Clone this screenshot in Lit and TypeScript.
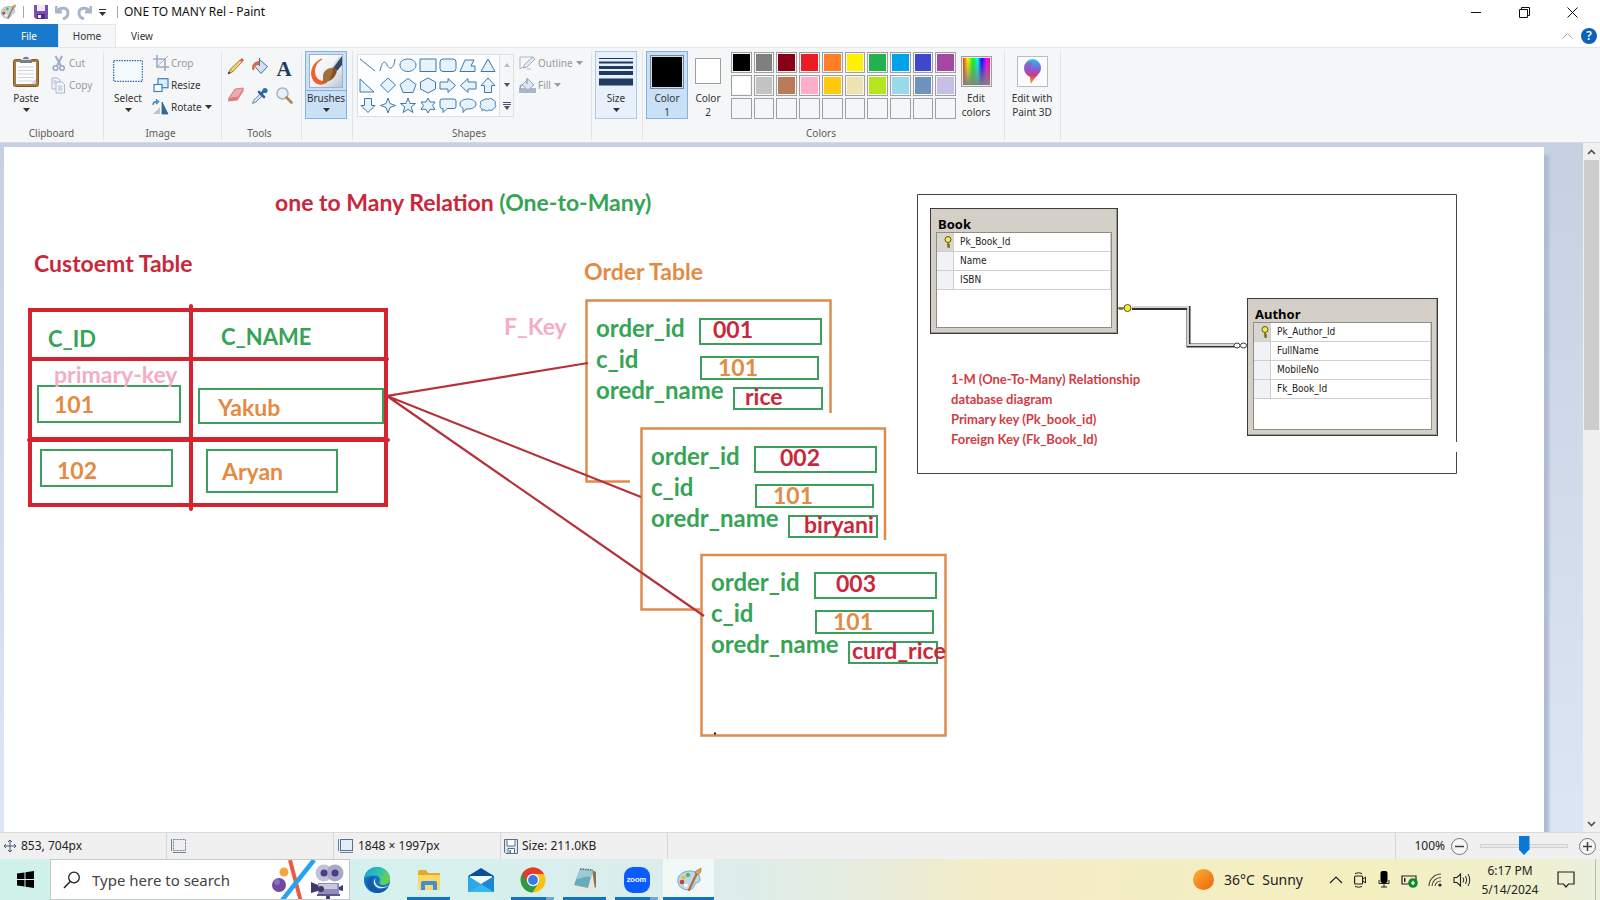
import { LitElement, html, svg, css } from "lit";
import { customElement, state } from "lit/decorators.js";
import { classMap } from "lit/directives/class-map.js";
import { styleMap } from "lit/directives/style-map.js";

const PALETTE = [
  ["Black", "#000000"], ["Gray-50%", "#7f7f7f"], ["Dark red", "#880015"], ["Red", "#ed1c24"], ["Orange", "#ff7f27"],
  ["Yellow", "#fff200"], ["Green", "#22b14c"], ["Turquoise", "#00a2e8"], ["Indigo", "#3f48cc"], ["Purple", "#a349a4"],
  ["White", "#ffffff"], ["Gray-25%", "#c3c3c3"], ["Brown", "#b97a57"], ["Rose", "#ffaec9"], ["Gold", "#ffc90e"],
  ["Light yellow", "#efe4b0"], ["Lime", "#b5e61d"], ["Light turquoise", "#99d9ea"], ["Blue-gray", "#7092be"], ["Lavender", "#c8bfe7"],
  ...Array.from({ length: 10 }, (_, i) => [`Custom ${i + 1}`, ""]),
];

const SHAPES: [string, string][] = [
  ["Line", "M2 2L17 14"],
  ["Curve", "M2 14C4 4 7 3 9 8C12 14 16 11 17 2"],
  ["Oval", "M10 2C14.500 2 18 4.600 18 8S14.500 14.500 10 14.500S2 11.800 2 8S5.500 2 10 2Z"],
  ["Rectangle", "M2 2H18V14.500H2Z"],
  ["Rounded rectangle", "M5 2H15Q18 2 18 5V11.500Q18 14.500 15 14.500H5Q2 14.500 2 11.500V5Q2 2 5 2Z"],
  ["Polygon", "M7 3H16L13 9H17V14.500H2Z"],
  ["Triangle", "M10 2L17 14.500H3Z"],
  ["Right triangle", "M2 2V15H16Z"],
  ["Diamond", "M10 1L17.500 8L10 15.500L2.500 8Z"],
  ["Pentagon", "M10 1.500L18 7.500L15 15.500H5L2 7.500Z"],
  ["Hexagon", "M10 1L17.500 5V12L10 16L2.500 12V5Z"],
  ["Right arrow", "M2 5H10V1.500L17.500 8.500L10 15.500V12H2Z"],
  ["Left arrow", "M18 5H10V1.500L2.500 8.500L10 15.500V12H18Z"],
  ["Up arrow", "M10 1L17 8.500H13.500V15.500H6.500V8.500H3Z"],
  ["Down arrow", "M10 15.500L17 8.500H13.500V1.500H6.500V8.500H3Z"],
  ["Four-point star", "M10 1L12 6.500L17.500 8.500L12 10.500L10 16L8 10.500L2.500 8.500L8 6.500Z"],
  ["Five-point star", "M10 1L12 6.500H17.500L13.200 10L15 15.500L10 12.300L5 15.500L6.800 10L2.500 6.500H8Z"],
  ["Six-point star", "M10 1L12 5H17L14.500 8.500L17 12.300H12L10 16L8 12.300H3L5.500 8.500L3 5H8Z"],
  ["Rounded callout", "M4 2H16Q18 2 18 4V9.500Q18 11.500 16 11.500H9L5 15.500V11.500H4Q2 11.500 2 9.500V4Q2 2 4 2Z"],
  ["Oval callout", "M10 2C14.500 2 18 4 18 7S14.500 12 10 12H8L5 15.500V11.200C3 10.200 2 8.800 2 7C2 4 5.500 2 10 2Z"],
  ["Cloud callout", "M6 3C7 1.500 9 1.500 10 2.500C11.500 1 14 1 15 3C17.500 3.500 18 5.500 17 7C18.500 9 17.500 11 15.500 11.500C15 13.500 12.500 14 11 12.800C9.500 14.500 7 14 6 12.500C4 15.500 3.500 13 4.500 12C2 11.500 1.500 9 3 7.500C1.500 5.500 3 3 6 3Z"],
];

interface Order { x: number; y: number; fields: { name: string; value: string; tone: string; pad: number }[] }
const order = (x: number, y: number, id: string, idPad: number, cPad: number, item: string, itemPad: number): Order => ({
  x, y,
  fields: [
    { name: "order_id", value: id, tone: "red", pad: idPad },
    { name: "c_id", value: "101", tone: "orange", pad: cPad },
    { name: "oredr_name", value: item, tone: "red", pad: itemPad },
  ],
});
const ORDERS: Order[] = [
  order(581, 152, "001", 12, 16, "rice", 10),
  order(636, 280, "002", 24, 16, "biryani", 14),
  order(696, 406, "003", 20, 16, "curd_rice", 2),
];

const ENTITIES = [
  { name: "Book", x: 926, y: 61, w: 188, h: 126, cols: ["Pk_Book_Id", "Name", "ISBN"] },
  { name: "Author", x: 1243, y: 151, w: 191, h: 138, cols: ["Pk_Author_Id", "FullName", "MobileNo", "Fk_Book_Id"] },
];

const LABELS = [
  { text: "Custoemt Table", x: 30, y: 101, tone: "red" },
  { text: "Order Table", x: 580, y: 109, tone: "orange" },
  { text: "F_Key", x: 500, y: 164, tone: "pink" },
];

const icon = (w: number, h: number, body: unknown) =>
  html`<svg width=${w} height=${h} viewBox="0 0 ${w} ${h}" fill="none" aria-hidden="true">${body}</svg>`;

const arrow = html`<svg class="arrow" width="7" height="4" viewBox="0 0 7 4" aria-hidden="true"><path d="M0 0H7L3.500 4Z" fill="currentColor"/></svg>`;

const paletteIcon = (s: number) => html`<svg width=${s} height=${s} viewBox="0 0 26 26" fill="none" aria-hidden="true">
  <path d="M2 15C1 9 6 4.500 13 4C19 3.500 24 7 24 12C24 15 22 15.500 20 16C18 16.500 19 19 17 21C13 25 3 22.500 2 15Z" fill="#b9d9ee" stroke="#7ba6c6"/>
  <circle cx="6" cy="15" r="2.300" fill="#d33c38"/><circle cx="7.500" cy="10.500" r="2" fill="#f0bb33"/>
  <circle cx="12" cy="8" r="2.200" fill="#60b747"/><circle cx="10" cy="18.500" r="1.900" fill="#fff"/>
  <path d="M13 23L21 6" stroke="#b87333" stroke-width="2.400" stroke-linecap="round"/>
  <path d="M19 6C19 3 23 3 25 1C25 4 25 6 22 8Z" fill="#d6a15c" stroke="#95602c" stroke-width=".6"/></svg>`;

const IC = {
  save: icon(14, 14, svg`<path d="M0 0H14V14H2L0 12Z" fill="#7a4fb5"/><path d="M3 0H11V6H3Z" fill="#efe9fa"/><path d="M3 9H11V14H3Z" fill="#4b2f80"/><path d="M4 10H7V13H4Z" fill="#f4f0fb"/>`),
  undo: icon(15, 15, svg`<path d="M1 1V7H7M2 6C6 1.500 13 2.500 13 8C13 11 11 13 8 14" stroke="#a8b6cc" stroke-width="3"/>`),
  redo: icon(15, 15, svg`<path d="M14 1V7H8M13 6C9 1.500 2 2.500 2 8C2 11 4 13 7 14" stroke="#a8b6cc" stroke-width="3"/>`),
  paste: icon(26, 31, svg`<rect x=".5" y="3.500" width="25" height="27" rx="2" fill="#a97b42" stroke="#80592a"/><path d="M3 6H23V28H3Z" fill="#fdfdfe"/><path d="M5 11H21M5 14.500H21M5 18H21M5 21.500H21M5 25H21" stroke="#c9d4e4"/><path d="M7 3H10C10 0 16 0 16 3H19V7H7Z" fill="#7b7e84"/><path d="M8 3.500H18" stroke="#d5d7da"/><path d="M23 23V28H18Z" fill="#cfd5df"/>`),
  cut: icon(16, 17, svg`<path d="M4.500 1L10 11M11 1L6 11" stroke="#9eacc2" stroke-width="2"/><circle cx="4.500" cy="13" r="2.300" stroke="#9eacc2" stroke-width="1.600"/><circle cx="11" cy="13" r="2.300" stroke="#9eacc2" stroke-width="1.600"/>`),
  copy: icon(16, 17, svg`<path d="M1 1H7L9 3V12H1Z" fill="#eef2f8" stroke="#a9b7cc"/><path d="M5 5H11L13.500 7.500V16H5Z" fill="#f4f7fb" stroke="#a9b7cc"/><path d="M7 9H11.500M7 11H11.500M7 13H11.500M2.500 4H5M2.500 6H4" stroke="#a9b7cc"/>`),
  select: icon(30, 22, svg`<rect x=".7" y=".7" width="28.600" height="20.600" fill="#f5fafe" stroke="#2f679f" stroke-width="1.200" stroke-dasharray="1.500 1.100"/>`),
  crop: icon(16, 16, svg`<path d="M0 4H12V16M4 0V12H16" stroke="#9cabc2" stroke-width="1.600"/><path d="M4 12L15 1" stroke="#9cabc2"/><path d="M6 6H10L6 10Z" fill="#d8e0eb"/>`),
  resize: icon(16, 15, svg`<rect x="5" y=".7" width="10" height="9" fill="#dcedfb" stroke="#3c81bd" stroke-width="1.200"/><rect x="1" y="6.500" width="8" height="7" fill="#fff" stroke="#3c81bd" stroke-width="1.200"/>`),
  rotate: icon(17, 17, svg`<path d="M10 3V15H16Z" fill="#2e6da4" stroke="#24567f" stroke-width=".7"/><path d="M8 8V15H1Z" fill="#b8c6d6"/><path d="M1 6C1 3 3 2.500 5 2.500M4 .500L6.500 2.500L4 5" stroke="#3587c7" stroke-width="1.500"/>`),
  pencil: icon(18, 18, svg`<path d="M1 17L3 12.500L13 3L15 5L5.500 15Z" fill="#f1cf6b" stroke="#8d6b30" stroke-width=".8"/><path d="M13 2.800L14.800 1.200Q17 1.500 16.800 3.400L15.300 4.800Z" fill="#c8625b"/><path d="M1 17L2 14.500L3.600 16Z" fill="#222"/><path d="M3.500 12.500L5.800 14.700" stroke="#a57d3d" stroke-width=".8"/>`),
  bucket: icon(18, 18, svg`<path d="M9 3L16.500 9.500L10 16.500L3.500 9Z" fill="#cfe3f3" stroke="#4a7298"/><path d="M8.500 9V1" stroke="#4a7298"/><path d="M8 4C4 4.500 1 7 1 11C1 14 3.500 14 3.500 11C3.500 9 5 8 8 8Z" fill="#e5643a"/>`),
  eraser: icon(18, 16, svg`<path d="M8 2L16.500 1L11.500 10L1.500 11.500Z" fill="#f2a9a9" stroke="#c96f73" stroke-width=".8"/><path d="M1.500 11.500L1 14.500L10.500 13.500L16.500 4V1L11.500 10Z" fill="#d87e80"/>`),
  dropper: icon(18, 18, svg`<path d="M1.500 16.500L3 13L9 7L11 9L5 15Z" fill="#d6e5f0" stroke="#5c7f9e" stroke-width=".9"/><path d="M8 5L13 10M10 7L14 3" stroke="#27679f" stroke-width="2.600" stroke-linecap="round"/><circle cx="14" cy="3.500" r="2.600" fill="#2a6fae"/>`),
  magnifier: icon(17, 17, svg`<circle cx="6.500" cy="6.500" r="5.500" fill="#e5f2fb" stroke="#a7b4c1" stroke-width="1.500"/><path d="M10.500 10.500L15.500 15.500" stroke="#b18656" stroke-width="2.600" stroke-linecap="round"/>`),
  brush: html`<svg width="34" height="34" viewBox="0 0 34 34" fill="none" aria-hidden="true"><defs><linearGradient id="bg" x1="0" y1="0" x2="1" y2="1"><stop offset="0" stop-color="#fff"/><stop offset=".6" stop-color="#eef1f5"/><stop offset="1" stop-color="#b6c1cf"/></linearGradient></defs><rect x=".5" y=".5" width="33" height="33" fill="url(#bg)" stroke="#9fb3c9"/><path d="M13 5C3 8 0 20 5 27C8 31 14 31 18 28C11 28 6 25 5.500 18C5.500 12 8 8 13 5Z" fill="#ee5f2a" stroke="#ee5f2a"/><path d="M33 2L23 14L28 17L33 11Z" fill="#33475f"/><path d="M31 3L23 14" stroke="#d3dae2" stroke-width="2"/><path d="M22 14C27 13 29 17 27 20C25 25 21 28 12 29C16 26 12 21 16 17C18 15 20 14 22 14Z" fill="#a3703c"/><path d="M24 14C27 14 28 17 27 19C26 22 23 25 20 26C23 21 24 18 24 14Z" fill="#7d5227"/></svg>`,
  outline: icon(17, 15, svg`<path d="M14 1H1V13L4 11M8 13H12" stroke="#aab7ca"/><path d="M4 12L6 8L14 1L16 3L8 11Z" fill="#e8edf4" stroke="#9babc1"/>`),
  fill: icon(17, 16, svg`<path d="M0 11H17V16H0Z" fill="#a9b6cb"/><path d="M9 2L15 8L9 13L3 8Z" fill="#dfe6ef" stroke="#9babc1"/><path d="M8 7V1M3 8Q0 9 2 12" stroke="#9babc1" stroke-width="1.500"/>`),
  size: icon(34, 28, svg`<path d="M0 .5H34" stroke="#1f3b5f"/><path d="M0 4.500H34" stroke="#1f3b5f" stroke-width="2"/><path d="M0 9.500H34" stroke="#1f3b5f" stroke-width="3"/><path d="M0 15H34" stroke="#1f3b5f" stroke-width="4"/><path d="M0 24H34" stroke="#1f3b5f" stroke-width="7"/>`),
  balloon: html`<svg width="31" height="31" viewBox="0 0 31 31" fill="none" aria-hidden="true"><defs><linearGradient id="ba" x1=".5" y1="0" x2=".5" y2="1"><stop offset="0" stop-color="#28c3ef"/><stop offset=".4" stop-color="#7c62d9"/><stop offset=".65" stop-color="#d6367f"/><stop offset="1" stop-color="#ffb000"/></linearGradient></defs><rect x=".5" y=".5" width="30" height="30" fill="#fafbfc" stroke="#b9bcc0"/><path d="M15.500 3A9 9 0 0 1 24 12C24 18 18 20 14 28C13 25 13.500 23 13 21C9 19 7 16 7 12A9 9 0 0 1 15.500 3Z" fill="url(#ba)"/><path d="M8 10C8 15 11 19 15 20C13 16 13 10 16 7C13 5 9 6 8 10Z" fill="#b04bb5" opacity=".6"/></svg>`,
  move: icon(14, 14, svg`<path d="M7 1V13M1 7H13M5 3L7 1L9 3M5 11L7 13L9 11M3 5L1 7L3 9M11 5L13 7L11 9" stroke="#44597a"/>`),
  sel: icon(17, 15, svg`<rect x="3.500" y=".5" width="12" height="11" stroke="#6c7f99" stroke-dasharray="2 1"/><path d="M1.500 0V12M3 13.500H16" stroke="#6c7f99"/>`),
  dims: icon(17, 15, svg`<rect x="3.500" y=".5" width="12" height="11" fill="#e1edf8" stroke="#55708f"/><path d="M1.500 0V12M3 13.500H16" stroke="#6c7f99"/>`),
  disk: icon(14, 15, svg`<path d="M.5 .5H13.500V14.500H2L.5 13Z" fill="#dfe8f2" stroke="#55708f"/><path d="M3 .5H11V7H3Z" fill="#fff" stroke="#55708f"/><path d="M4 9.500H10.500V14.500H4Z" fill="#fff" stroke="#55708f"/><path d="M5.500 11H7V14H5.500Z" fill="#55708f"/>`),
  windows: icon(17, 17, svg`<path d="M0 2.500L7.500 1.500V8H0ZM8.500 1.300L17 0V8H8.500ZM0 9H7.500V15.500L0 14.500ZM8.500 9H17V17L8.500 15.700Z" fill="#000"/>`),
  search: icon(18, 18, svg`<circle cx="11" cy="6.500" r="5.300" stroke="#222" stroke-width="1.300"/><path d="M7.200 10.500L1 17" stroke="#222" stroke-width="1.500"/>`),
  doodle: icon(78, 40, svg`<circle cx="13" cy="12" r="4.500" fill="#f3a63b"/><circle cx="8" cy="25" r="7" fill="#6f4aa3"/><circle cx="6" cy="22" r="3" fill="#8e6cc0"/><path d="M19 0L30 42" stroke="#ef5a43" stroke-width="4"/><path d="M43 0L9 43" stroke="#24a5ee" stroke-width="4.500"/><path d="M57 34V40" stroke="#4a4478" stroke-width="4"/><circle cx="53" cy="13" r="8.500" fill="#c3c1d6"/><circle cx="64" cy="13" r="8.500" fill="#aaa8c4"/><circle cx="53" cy="13" r="3.500" fill="#46408a"/><circle cx="64" cy="13" r="3.500" fill="#46408a"/><path d="M47 23H68V34H47Z" fill="#8f8cb8"/><path d="M48 24H66V29H48Z" fill="#c9c7e2"/><path d="M40 22L47 25V31L40 33Z" fill="#3f3a70"/><path d="M68 27L72 25V31L68 30Z" fill="#3f3a70"/><circle cx="50" cy="29" r="3" fill="#3d3868"/><path d="M46 35H69" stroke="#5a5690" stroke-width="2"/>`),
  edge: html`<svg width="26" height="26" viewBox="0 0 26 26" aria-hidden="true"><defs><linearGradient id="eg" x1="0" y1="0" x2="1" y2=".4"><stop offset="0" stop-color="#1b9de2"/><stop offset=".6" stop-color="#2bc4b0"/><stop offset="1" stop-color="#6ad04b"/></linearGradient></defs><circle cx="13" cy="13" r="13" fill="#1372c4"/><path d="M.3 11C1.500 4 7 0 13 0C21 0 26 6 26 11.500C26 15.500 23 18 19.500 18C16.500 18 15 17 15.500 15.500C17 13 15.500 8.500 10.500 8.500C5 8.500 1 11 .3 11Z" fill="url(#eg)"/><path d="M10 10C7 13 8 20 14 22C18 23 22 21.500 24.500 19.500C22 24 18 26 13 26C8 26 3 21 3 16C3 13 6 10 10 10Z" fill="#1558a8"/><path d="M12 11.500C9.500 14 12 19.500 17 20C20 20.300 22.500 19.500 24.500 18.500C22 21 16 22.500 12.500 20C9 17 9 13 12 11.500Z" fill="#e1f3f2"/></svg>`,
  explorer: icon(24, 22, svg`<path d="M1 3Q1 1 3 1H9L11 4H22Q23 4 23 5V20H1Z" fill="#e5a82b"/><path d="M1 6H23V20Q23 21 22 21H2Q1 21 1 20Z" fill="#fcd667"/><path d="M4 21V14Q4 12 6 12H18Q20 12 20 14V21H16V16H8V21Z" fill="#3f8fd6"/>`),
  mail: icon(26, 26, svg`<path d="M0 9L13 1L26 9V12H0Z" fill="#0d4f97"/><path d="M2 9H24V18H2Z" fill="#f3f8fc"/><path d="M0 9L26 25H0Z" fill="#2ca7e8"/><path d="M26 9L0 25H26Z" fill="#1b87d3"/><path d="M13 17L26 25H0Z" fill="#36b5ef"/>`),
  chrome: icon(26, 26, svg`<circle cx="13" cy="13" r="12.500" fill="#fbc116"/><path d="M13 13L2.200 6.800A12.500 12.500 0 0 1 23.800 6.800H13Z" fill="#e33b2e"/><path d="M13 13L2.200 6.800A12.500 12.500 0 0 0 12.500 25.500L18.400 16.100Z" fill="#2a9a48"/><path d="M2.200 6.800A12.500 12.500 0 0 1 23.800 6.800H13A6.200 6.200 0 0 0 7.600 16.100Z" fill="#e33b2e"/><circle cx="13" cy="13" r="6.200" fill="#fff"/><circle cx="13" cy="13" r="4.900" fill="#3a79e8"/>`),
  notepad: icon(26, 26, svg`<path d="M20 3L24 5L24 20L20 23Z" fill="#8c7350"/><path d="M20 3L23 22L17 25L3 22Z" fill="#e8e6de"/><path d="M8 2L21 3L16 21L2 18Z" fill="#66adb9"/><path d="M8 2L21 3L19 10C13 8 9 12 4 12Z" fill="#9ccbd2"/><path d="M8 2L21 3" stroke="#596c74" stroke-width="1.500" stroke-dasharray="1.500 1"/>`),
  sun: html`<svg width="21" height="21" viewBox="0 0 21 21" aria-hidden="true"><defs><linearGradient id="su" x1="0" y1="0" x2="1" y2="1"><stop offset="0" stop-color="#f9b233"/><stop offset="1" stop-color="#ee6310"/></linearGradient></defs><circle cx="10.500" cy="10.500" r="10.500" fill="url(#su)"/></svg>`,
  chevron: icon(14, 8, svg`<path d="M1 7L7 1L13 7" stroke="#222" stroke-width="1.200"/>`),
  meet: icon(14, 16, svg`<rect x="1.600" y="4" width="8" height="8" rx="1" stroke="#222" stroke-width="1.200"/><path d="M10 7L12.500 5V11L10 9M2 1.500Q6 0 9 1.500M2 14.500Q6 16 9 14.500" stroke="#222"/>`),
  mic: icon(14, 17, svg`<rect x="3.500" y="0" width="7" height="12" rx="2" fill="#000"/><path d="M2 9V12.500H12V9M7 13V16M4 16H10" stroke="#222"/>`),
  battery: icon(17, 16, svg`<path d="M1 4H15V12H1Z" stroke="#222" stroke-width="1.200"/><path d="M3 6H4.500V10H3Z" fill="#222"/><circle cx="12" cy="11" r="4.800" fill="#12852c"/><path d="M12 8.500L14 11L12 13.500L10 11Z" fill="#d8f4dc"/>`),
  wifi: icon(15, 14, svg`<path d="M1 13A12 12 0 0 1 13 1M4 13A9 9 0 0 1 13 4.500M7 13A6 6 0 0 1 13 8" stroke="#444" stroke-width="1.100"/><circle cx="12" cy="12" r="1.600" fill="#222"/>`),
  volume: icon(18, 16, svg`<path d="M1 5.500H4L7.500 2V14L4 10.500H1Z" stroke="#222" stroke-width="1.100"/><path d="M10 5.500Q11.500 8 10 10.500M12.500 4Q15 8 12.500 12M15 2Q18.500 8 15 14" stroke="#222"/>`),
  note: icon(18, 17, svg`<path d="M1 1H17V13H11.500L9 16L6.500 13H1Z" stroke="#222" stroke-width="1.200"/>`),
};

@customElement("app-root")
export class AppRoot extends LitElement {
  @state() private zoomLevel = 50;
  @state() private tab = "Home";

  static styles = css`
    :host { display: flex; flex-direction: column; height: 100vh; overflow: hidden; background: #fff; color: #333;
      font: 10px/14px "Noto Sans", "Open Sans", sans-serif; }
    * { box-sizing: border-box; }
    svg { display: block; flex: none; }
    button, input { font: inherit; color: inherit; margin: 0; padding: 0; border: 0; background: none; }
    button { display: flex; align-items: center; justify-content: center; }

    .titlebar { display: flex; align-items: center; height: 24px; flex: none; }
    .quick { display: flex; align-items: center; gap: 7px; }
    .sep { width: 1px; height: 12px; margin-right: 3px; background: #a9a9a9; }
    .sep:last-child { margin: 0 0 0 4px; }
    h1 { margin: 0 0 0 6px; font-size: 12px; line-height: 16px; font-weight: 400; color: #111; }
    .winbtns { display: flex; margin-left: auto; padding-right: 4px; }
    .winbtns button { width: 48px; height: 24px; }

    .tabs { display: flex; height: 24px; flex: none; border-bottom: 1px solid #e6e7e8; }
    .tabs > button { width: 58px; }
    .tabs > button:nth-child(3) { width: 52px; }
    .tabs .file { background: #1979ca; color: #fff; }
    .tabs .on { background: #f5f6f7; border: 1px solid #e3e4e6; border-bottom: 0; }
    .tabs .end { margin-left: auto; display: flex; align-items: center; gap: 8px; padding-right: 3px; }
    .tabs .help { width: 16px; height: 16px; border-radius: 50%; background: #0a63b8; color: #fff; font-size: 12px; font-weight: 600; }

    .ribbon { display: flex; height: 94px; flex: none; padding-top: 3px; background: #f5f6f7; }
    .group { display: flex; flex-direction: column; height: 89px; border-right: 1px solid #e2e3e5; }
    .body { display: flex; flex: 1; align-items: flex-start; }
    .glabel { height: 14px; text-align: center; color: #5c5c5c; }
    .clip { width: 104px; padding-left: 9px; } .clip .glabel { margin-left: -9px; }
    .image { width: 118px; padding-left: 7px; } .image .glabel { margin-left: -11px; }
    .tools { width: 80px; } .tools .glabel { margin-left: -4px; }
    .brushes { width: 51px; padding-left: 3px; }
    .shapes { width: 239px; padding-left: 4px; } .shapes .glabel { margin-left: -10px; }
    .size { width: 51px; padding-left: 3px; }
    .colors { width: 362px; padding-left: 3px; } .colors .glabel { margin-left: -8px; }
    .p3d { width: 56px; padding-left: 5px; }
    .big { flex-direction: column; justify-content: flex-start; width: 34px; height: 68px; }
    .big .pic { display: flex; align-items: center; justify-content: center; height: 40px; flex: none; }
    .big .arrow { margin-top: 3px; color: #333; }
    .stack { display: flex; flex-direction: column; padding: 1px 0 0 7px; }
    .stack button { justify-content: flex-start; gap: 2px; height: 22px; }
    .stack svg.arrow { margin-left: 1px; }
    .stack.dim, .off { color: #9a9a9a; }
    .shapes .stack { padding-left: 5px; }
    .stack .slot { display: flex; justify-content: center; width: 17px; }
    .toolgrid { display: grid; grid-template-columns: repeat(3, 24px); grid-auto-rows: 30px; padding: 6px 0 0 2px; }
    .letter { font: 700 21px/24px "Liberation Serif", serif; color: #1c3b62; }
    .pressed { width: 42px; background: #c9e0f7; border: 1px solid #84b2e0; }
    .big.pressed .pic, .big.hover .pic { height: 39px; }
    .pressed.split .pic { border-bottom: 1px solid #84b2e0; width: 40px; }
    .hover { width: 42px; background: #e8f1fb; border: 1px solid #a9cbee; }
    .gallery { display: flex; height: 63px; margin-top: 3px; border: 1px solid #dcdfe3; background: #fbfdff; }
    .shapegrid { display: grid; grid-template-columns: repeat(7, 20px); grid-auto-rows: 20px; padding-right: 1px; }
    .scroller { display: flex; flex-direction: column; width: 14px; border-left: 1px solid #dcdfe3; background: #f5f6f7; color: #44546a; }
    .scroller button { flex: 1; }
    .c2 { width: 40px; }
    .swatch { width: 26px; height: 26px; border: 1px solid #a0a0a0; background: #fff; }
    .swatch.main { width: 34px; height: 34px; border: 1px solid #7d8894; background: #000; box-shadow: inset 0 0 0 1px #c9e0f7; }
    .palette { display: grid; grid-template-columns: repeat(10, 1fr); grid-auto-rows: 21px; gap: 2px; width: 228px; padding: 1px 0 0 3px; }
    .palette button { border: 1px solid #a0a0a0; background: var(--ink, #f5f6f7); box-shadow: inset 0 0 0 1px #f5f6f7; }
    .big.edit { width: 40px; }
    .big.edit3 { width: 44px; }
    .spectrum { width: 31px; height: 31px; border: 1px solid #a0a0a0; box-shadow: inset 0 0 0 1px #e8e8e8;
      background: linear-gradient(transparent, #808080), linear-gradient(90deg, red, #ff0 20%, #0f0 38%, #0ff 54%, #00f 68%, #f0f 85%, #f04); }

    .workspace { display: flex; flex: 1; min-height: 0; background: linear-gradient(#c6d0e1, #dce6f4); border-top: 1px solid #d5dbe5; }
    .view { position: relative; flex: 1; min-width: 0; padding: 4px 39px 0 4px; overflow: hidden; }
    .sheet { position: relative; height: 100%; background: #fff; box-shadow: 6px 7px 3px -1px #aebbd0; overflow: visible; }
    .ink { position: absolute; inset: 0; overflow: hidden; width: 100%; height: 100%; }
    .scrollbar { display: flex; flex-direction: column; width: 17px; background: #f0f0f0; }
    .scrollbar button { height: 17px; flex: none; }
    .thumb { height: 270px; margin: 0 1px; background: #cdcdcd; }
    .scrollbar .down { margin-top: auto; }

    .paint { font: 700 23px/30px Lato, "Open Sans", sans-serif; white-space: nowrap; }
    .at { position: absolute; margin: 0; }
    .red { color: #c9283a; } .green { color: #35a455; } .orange { color: #e38b43; } .pink { color: #f4adc6; }
    .cust { position: absolute; left: 24px; top: 161px; width: 360px; table-layout: fixed; border-spacing: 4px; background: #d3242f; }
    .cust th, .cust td { padding: 0; background: #fff; text-align: left; vertical-align: top; font-weight: 700; }
    .cust .c1 { width: 157px; }
    .cust th { height: 45px; padding: 11px 0 0 16px; font-size: 22px; line-height: 32px; }
    .cust th + th { padding: 9px 0 0 28px; }
    .cust .key { height: 24px; padding-left: 22px; line-height: 26px; }
    .cust .r1 { height: 76px; } .cust .r2 { height: 62px; }
    .cell { border: 2px solid #3c9f5b; padding-left: 15px; }
    .r1 .cell { width: 144px; height: 38px; margin-left: 5px; line-height: 34px; }
    .r1 td + td .cell { width: 186px; height: 36px; margin: 27px 0 0 5px; padding-left: 18px; }
    .r2 .cell { width: 133px; height: 38px; margin: 8px 0 0 8px; line-height: 38px; }
    .r2 td + td .cell { width: 132px; height: 44px; margin-left: 13px; line-height: 40px; padding-left: 14px; }

    .order { position: absolute; display: flex; flex-direction: column; width: 246px; height: 183px; padding: 14px 9px 0 11px; }
    .field { display: flex; align-items: flex-start; justify-content: space-between; height: 31px; line-height: 30px; }
    .field > .green { font-size: 24px; }
    .slotbox { width: 123px; height: 27px; margin: 5px 0 0; border: 2px solid #3c9f5b; line-height: 18px; white-space: nowrap; }
    .field:nth-child(2) .slotbox { width: 119px; height: 24px; margin: 12px 3px 0 0; }
    .field:nth-child(3) .slotbox { width: 90px; height: 23px; margin: 12px -1px 0 0; line-height: 14px; }

    .entity { position: absolute; padding: 9px 5px 5px; border: 1px solid #3c3c3c; background: #d4d0c8; color: #111;
      display: flex; flex-direction: column; box-shadow: inset -1px -1px #9a978f; }
    .entity h2 { margin: 0 0 2px 2px; font: 700 13px/12px "Noto Sans", sans-serif; color: #000; }
    .cols { flex: 1; border: 1px solid #8f8c86; background: #fff; }
    .cols table { width: 100%; border-spacing: 0; font: 10px/14px "DejaVu Sans Condensed", "Noto Sans", sans-serif; color: #222; }
    .cols td { height: 19px; padding: 0 0 0 6px; border-bottom: 1px solid #cfcfcf; border-right: 1px solid #cfcfcf; }
    .cols td:first-child { width: 17px; padding: 0 0 0 3px; background: #f1f2f6; }
    .cols tr:first-child td:first-child { background: #d9d6cf; }
    .notes { position: absolute; margin: 0; font: 700 13px/20px Lato, sans-serif; color: #d03d45; }

    .status { display: flex; height: 27px; flex: none; background: #f0f0f0; border-top: 1px solid #dadada; font-size: 12px; line-height: 16px; color: #222; }
    .status .item { display: flex; align-items: center; gap: 4px; width: 167px; padding-left: 3px; border-right: 1px solid #d7d7d7; }
    .zoomer { display: flex; align-items: center; margin-left: auto; padding: 0 4px 0 18px; border-left: 1px solid #d7d7d7; gap: 6px; }
    .round { width: 17px; height: 17px; border: 1px solid #777; border-radius: 50%; background: #f6f6f6; }
    input[type="range"] { appearance: none; width: 88px; height: 20px; margin: 0 5px 0 6px; }
    input[type="range"]::-webkit-slider-runnable-track { height: 4px; border: 1px solid #d0d0d0; background: #e7eaea; }
    input[type="range"]::-webkit-slider-thumb { appearance: none; width: 11px; height: 19px; margin-top: -9px; background: #0a78d7;
      clip-path: polygon(0 0, 100% 0, 100% 70%, 50% 100%, 0 70%); }

    .taskbar { display: flex; height: 41px; flex: none; color: #222;
      background: linear-gradient(90deg, #d0f0ea, #d6f0ee 30%, #dcedec 45%, #e6ecdd 54%, #f3ecc8 61%, #f5efbf 85%, #eff0cf 96%, #eaf0dd); }
    .start { width: 50px; }
    .searchbox { display: flex; align-items: center; gap: 11px; width: 300px; padding-left: 12px; background: #fff; border: 1px solid #c3c9c9; overflow: hidden; }
    .searchbox input { flex: 1; min-width: 0; font-size: 15px; line-height: 20px; outline: 0; }
    .searchbox input::placeholder { color: #444; opacity: 1; }
    .searchbox label { display: flex; }
    .apps { display: flex; gap: 1px; padding-left: 1px; }
    .apps button { position: relative; width: 51px; }
    .apps .run::after { content: ""; position: absolute; left: 4px; right: 4px; bottom: 0; height: 3px; background: #0e74c8; }
    .apps .many::after { background: linear-gradient(90deg, #0e74c8 35px, #6ea9d8 35px); }
    .apps .live { background: #f1f8f8; } .apps .live::after { left: 0; right: 0; }
    .zoomapp { width: 26px; height: 26px; border-radius: 9px; background: #0b5cff; color: #fff; font: 700 8px/25px Lato, sans-serif; text-align: center; }
    .tray { display: flex; align-items: center; margin-left: auto; font-size: 14px; line-height: 18px; }
    .weather { gap: 10px; margin-right: 26px; white-space: pre; }
    .tray .icons { display: flex; align-items: center; gap: 10px; }
    .clock { width: 68px; margin-left: 5px; text-align: center; font-size: 12px; line-height: 19px; }
    .bell { margin: 0 20px 0 13px; }
    .edge { width: 5px; height: 41px; border-left: 1px solid #b7bda5; }
  `;

  private big(label: unknown, pic: unknown, cls = "", drop = true) {
    return html`<button class="big ${cls}"><span class="pic">${pic}</span><span>${label}</span>${drop ? arrow : ""}</button>`;
  }

  private small(label: string, pic: unknown, drop = false, off = false) {
    return html`<button class=${off ? "off" : ""}><span class="slot">${pic}</span>${label}${drop ? arrow : ""}</button>`;
  }

  private renderRibbon() {
    return html`<section class="ribbon" aria-label="Ribbon">
      <div class="group clip"><div class="body">
        ${this.big("Paste", IC.paste)}
        <div class="stack dim">${this.small("Cut", IC.cut)}${this.small("Copy", IC.copy)}</div>
      </div><div class="glabel">Clipboard</div></div>
      <div class="group image"><div class="body">
        ${this.big("Select", IC.select)}
        <div class="stack">${this.small("Crop", IC.crop, false, true)}${this.small("Resize", IC.resize)}${this.small("Rotate", IC.rotate, true)}</div>
      </div><div class="glabel">Image</div></div>
      <div class="group tools"><div class="body toolgrid">
        <button aria-label="Pencil">${IC.pencil}</button><button aria-label="Fill with color">${IC.bucket}</button>
        <button class="letter" aria-label="Text">A</button><button aria-label="Eraser">${IC.eraser}</button>
        <button aria-label="Color picker">${IC.dropper}</button><button aria-label="Magnifier">${IC.magnifier}</button>
      </div><div class="glabel">Tools</div></div>
      <div class="group brushes"><div class="body">${this.big("Brushes", IC.brush, "pressed split")}</div></div>
      <div class="group shapes"><div class="body">
        <div class="gallery"><div class="shapegrid">
          ${SHAPES.map(([name, d]) => html`<button aria-label=${name}><svg width="20" height="17" viewBox="0 0 20 17" aria-hidden="true"><path d=${d} fill=${name === "Line" || name === "Curve" ? "none" : "#e6f3fc"} stroke="#4079a8"/></svg></button>`)}
        </div><div class="scroller">
          <button class="off" aria-label="Scroll up">${icon(6, 4, svg`<path d="M3 0L6 4H0Z" fill="#b9bec6"/>`)}</button>
          <button aria-label="Scroll down">${icon(6, 4, svg`<path d="M0 0H6L3 4Z" fill="#44546a"/>`)}</button>
          <button aria-label="More shapes">${icon(8, 8, svg`<path d="M0 .5H8M0 2.500H8" stroke="#44546a"/><path d="M1 4H7L4 8Z" fill="#44546a"/>`)}</button>
        </div></div>
        <div class="stack dim">${this.small("Outline", IC.outline, true)}${this.small("Fill", IC.fill, true)}</div>
      </div><div class="glabel">Shapes</div></div>
      <div class="group size"><div class="body">${this.big("Size", IC.size, "hover")}</div></div>
      <div class="group colors"><div class="body">
        ${this.big(html`Color<br>1`, html`<span class="swatch main"></span>`, "pressed", false)}
        ${this.big(html`Color<br>2`, html`<span class="swatch"></span>`, "c2", false)}
        <div class="palette">${PALETTE.map(([n, c]) => html`<button aria-label=${n} style=${styleMap(c ? { "--ink": c } : {})}></button>`)}</div>
        ${this.big(html`Edit<br>colors`, html`<span class="spectrum"></span>`, "edit", false)}
      </div><div class="glabel">Colors</div></div>
      <div class="group p3d"><div class="body">${this.big(html`Edit with<br>Paint 3D`, IC.balloon, "edit3", false)}</div></div>
    </section>`;
  }

  private renderInk() {
    return html`<svg class="ink" fill="none" aria-hidden="true">
      <g stroke="#dd8c4c" stroke-width="2.500">
        <path d="M826.500 266V153.500H582.500V334.500H626"/>
        <path d="M881 393V281.500H637.500V462.500H696"/>
        <rect x="697.500" y="408" width="244" height="180.500"/>
      </g>
      <path d="M711 585V588M710 586.500H712" stroke="#111"/>
      <g stroke="#444"><path d="M1452.500 295V47.500H913.500V326.500H1452.500V305"/></g>
      <path d="M1128 161H1184.500V198.500H1230" stroke="#333" stroke-width="4"/>
      <path d="M1128 160H1184V198H1230" stroke="#d4d4d4" stroke-width="2"/>
      <path d="M1114 161H1121M1116 161V163M1118 161V163" stroke="#6b6a20" stroke-width="1.500"/>
      <circle cx="1123.500" cy="161" r="3.500" fill="#f3ec3f" stroke="#55551c"/>
      <ellipse cx="1233" cy="198.500" rx="3" ry="2.500" stroke="#333" fill="#fff"/><ellipse cx="1239.500" cy="198.500" rx="3" ry="2.500" stroke="#333" fill="#fff"/>
    </svg>`;
  }

  private renderLinks() {
    return html`<svg class="ink" fill="none" aria-hidden="true">
      <path d="M187 159V362M25 293H384M380 212H383" stroke="#d3242f" stroke-width="4" stroke-linecap="round"/>
      <path d="M584 216L383 249L637 350M383 249L700 469" stroke="#b6323b" stroke-width="2.200"/>
    </svg>`;
  }

  private renderSheet() {
    return html`<main class="view"><div class="sheet paint">
      ${this.renderInk()}
      <h2 class="at paint red" style=${styleMap({ left: "271px", top: "40px" })}>one to Many Relation <span class="green">(One-to-Many)</span></h2>
      ${LABELS.map((l) => html`<div class="at ${l.tone}" style=${styleMap({ left: `${l.x}px`, top: `${l.y}px` })}>${l.text}</div>`)}
      <table class="cust">
        <tr><th class="c1 green">C_ID</th><th class="green">C_NAME</th></tr>
        <tr class="r1 orange"><td><div class="key pink">primary-key</div><div class="cell">101</div></td><td><div class="cell">Yakub</div></td></tr>
        <tr class="r2 orange"><td><div class="cell">102</div></td><td><div class="cell">Aryan</div></td></tr>
      </table>
      ${ORDERS.map((o) => html`<div class="order" style=${styleMap({ left: `${o.x}px`, top: `${o.y}px` })}>
        ${o.fields.map((f) => html`<div class="field"><span class="green">${f.name}</span><span class="slotbox ${f.tone}" style=${styleMap({ paddingLeft: `${f.pad}px` })}>${f.value}</span></div>`)}
      </div>`)}
      ${this.renderLinks()}
      ${ENTITIES.map((e) => html`<section class="entity" style=${styleMap({ left: `${e.x}px`, top: `${e.y}px`, width: `${e.w}px`, height: `${e.h}px` })}>
        <h2>${e.name}</h2>
        <div class="cols"><table>${e.cols.map((c, i) => html`<tr><td>${i ? "" : icon(12, 12, svg`<circle cx="8" cy="3.500" r="3" fill="#f3ec3f" stroke="#55551c"/><path d="M8 6.500V11.500M8 9H10M8 11H10" stroke="#6b6a20" stroke-width="1.500"/>`)}</td><td>${c}</td></tr>`)}</table></div>
      </section>`)}
      <p class="notes" style=${styleMap({ left: "947px", top: "222px" })}>1-M (One-To-Many) Relationship<br>database diagram<br>Primary key (Pk_book_id)<br>Foreign Key (Fk_Book_Id)</p>
    </div></main>`;
  }

  render() {
    return html`
      <header class="titlebar">
        <div class="quick">
          ${paletteIcon(16)}<span class="sep"></span>
          <button aria-label="Save" class="save">${IC.save}</button><button aria-label="Undo">${IC.undo}</button>
          <button aria-label="Redo">${IC.redo}</button>
          <button aria-label="Customize toolbar">${icon(7, 7, svg`<path d="M0 .5H7" stroke="#333"/><path d="M0 3H7L3.500 7Z" fill="#333"/>`)}</button>
          <span class="sep"></span>
        </div>
        <h1>ONE TO MANY Rel - Paint</h1>
        <div class="winbtns">
          <button aria-label="Minimize">${icon(10, 10, svg`<path d="M0 5.500H10" stroke="#111"/>`)}</button>
          <button aria-label="Restore">${icon(11, 11, svg`<path d="M.5 2.500H8.500V10.500H.5ZM2.500 2V.5H10.500V8.500H9" stroke="#111"/>`)}</button>
          <button aria-label="Close">${icon(11, 11, svg`<path d="M.5 .5L10.500 10.500M10.500 .5L.5 10.500" stroke="#111"/>`)}</button>
        </div>
      </header>
      <nav class="tabs">
        <button class="file">File</button>
        ${["Home", "View"].map((t) => html`<button class=${classMap({ on: this.tab === t })} @click=${() => (this.tab = t)}>${t}</button>`)}
        <div class="end"><button aria-label="Collapse ribbon">${icon(11, 6, svg`<path d="M.5 5.500L5.500 .500L10.500 5.500" stroke="#aaa"/>`)}</button><button class="help">?</button></div>
      </nav>
      ${this.renderRibbon()}
      <div class="workspace">
        ${this.renderSheet()}
        <div class="scrollbar">
          <button aria-label="Scroll up">${icon(9, 6, svg`<path d="M1 5L4.500 1.500L8 5" stroke="#505050" stroke-width="1.600"/>`)}</button>
          <div class="thumb"></div>
          <button class="down" aria-label="Scroll down">${icon(9, 6, svg`<path d="M1 1L4.500 4.500L8 1" stroke="#505050" stroke-width="1.600"/>`)}</button>
        </div>
      </div>
      <footer class="status">
        <div class="item">${IC.move}853, 704px</div>
        <div class="item">${IC.sel}</div>
        <div class="item">${IC.dims}1848 × 1997px</div>
        <div class="item">${IC.disk}Size: 211.0KB</div>
        <div class="zoomer"><label for="zoom">100%</label>
          <button class="round" aria-label="Zoom out" @click=${() => (this.zoomLevel -= 10)}>${icon(9, 9, svg`<path d="M0 4.500H9" stroke="#444" stroke-width="1.500"/>`)}</button>
          <input id="zoom" type="range" min="0" max="100" .value=${String(this.zoomLevel)}>
          <button class="round" aria-label="Zoom in" @click=${() => (this.zoomLevel += 10)}>${icon(9, 9, svg`<path d="M0 4.500H9M4.500 0V9" stroke="#444" stroke-width="1.500"/>`)}</button>
        </div>
      </footer>
      <div class="taskbar">
        <button class="start" aria-label="Start">${IC.windows}</button>
        <div class="searchbox"><label for="q" aria-label="Search">${IC.search}</label><input id="q" type="text" placeholder="Type here to search">${IC.doodle}</div>
        <div class="apps">
          <button aria-label="Edge">${IC.edge}</button>
          <button class="run" aria-label="File Explorer">${IC.explorer}</button>
          <button aria-label="Mail">${IC.mail}</button>
          <button class="run many" aria-label="Chrome">${IC.chrome}</button>
          <button class="run" aria-label="Notepad">${IC.notepad}</button>
          <button class="run many"><span class="zoomapp">zoom</span></button>
          <button class="run live" aria-label="Paint">${paletteIcon(26)}</button>
        </div>
        <div class="tray">
          <button class="weather">${IC.sun}<span>36°C  Sunny</span></button>
          <div class="icons">${IC.chevron}${IC.meet}${IC.mic}${IC.battery}${IC.wifi}${IC.volume}</div>
          <div class="clock">6:17 PM<br>5/14/2024</div>
          <button class="bell" aria-label="Notifications">${IC.note}</button>
          <span class="edge"></span>
        </div>
      </div>`;
  }
}
